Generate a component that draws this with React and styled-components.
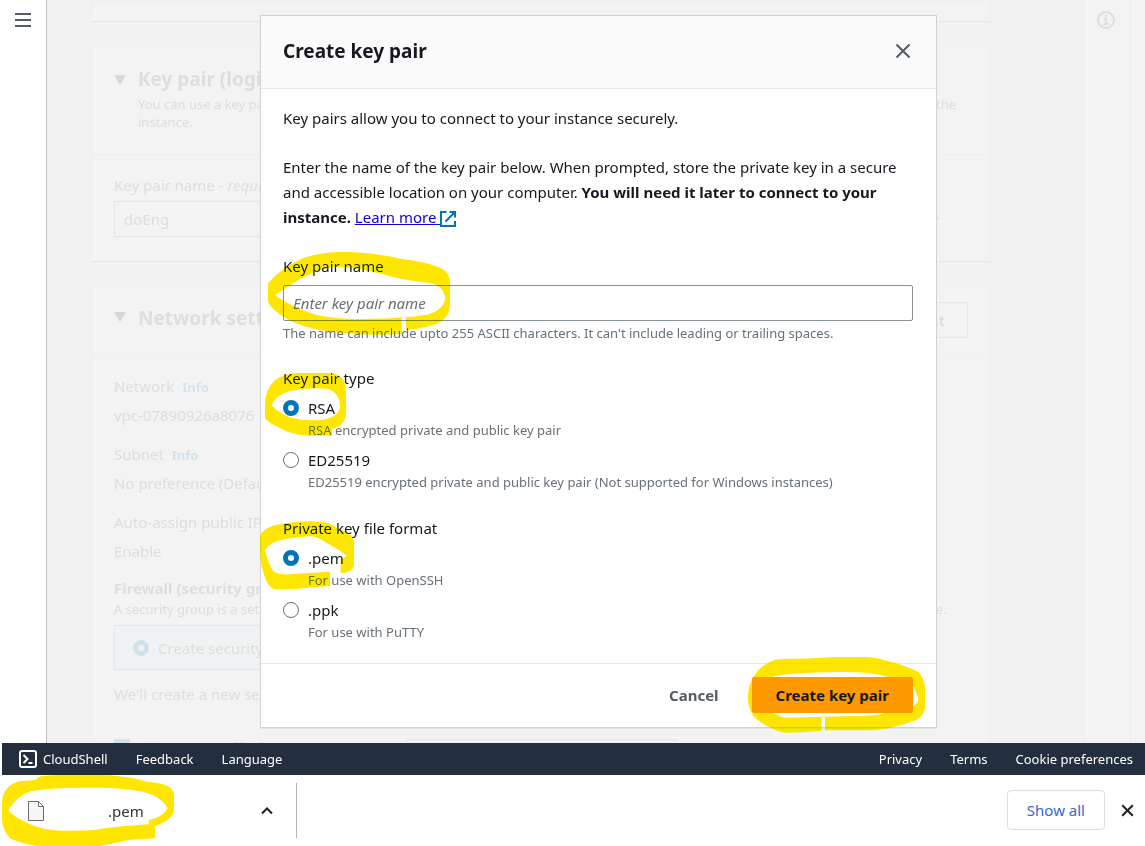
import React from "react";
import styled, { createGlobalStyle, css } from "styled-components";

const GlobalStyle = createGlobalStyle`
  *, *::before, *::after { box-sizing: border-box; }
  body {
    margin: 0;
    background: #fff;
    color: #16191f;
    font-family: "Noto Sans", "Open Sans", sans-serif;
    font-size: 15px;
    line-height: 24px;
  }
  button, input { font: inherit; color: inherit; }
  button { cursor: pointer; }
  h1, h2, p, fieldset, legend { margin: 0; padding: 0; border: 0; }
`;

const Page = styled.div`
  display: flex;
  flex-direction: column;
  min-height: 100vh;
  overflow: hidden;
`;

const Stage = styled.main`
  position: relative;
  flex: 1;
  display: flex;
  justify-content: center;
  align-items: flex-start;
  padding: 16px 0 16px 52px;
`;

/* ---------- Console page behind the dialog ---------- */

const Console = styled.div`
  position: absolute;
  inset: 0;
  overflow: hidden;
  display: flex;
  background: #f2f2f2;
  color: #dedede;
`;

const SideRail = styled.nav`
  flex: none;
  width: 47px;
  padding: 12px 15px;
  background: #fff;
  border-right: 1px solid #c0c2c2;
`;

const PlainButton = styled.button`
  display: flex;
  padding: 0;
  border: 0;
  background: none;
`;

const Content = styled.div`
  flex: 1;
  min-width: 0;
  display: flex;
  flex-direction: column;
  gap: 24px;
  padding: 0 92px 0 44px;
`;

const Panel = styled.section`
  flex: none;
  background: #f3f3f3;
  border: 1px solid #efefef;
  border-bottom-color: #e4e5e5;
`;

const PanelTail = styled(Panel)`
  height: 22px;
`;

const PanelHeader = styled.header`
  display: flex;
  align-items: flex-start;
  gap: 12px;
  padding: ${(p) => (p.$compact ? "15px 22px 18px" : "18px 22px 23px")};
  border-bottom: 1px solid #efefef;
`;

const Caret = styled.svg`
  flex: none;
  width: 12px;
  height: 32px;
`;

const PanelTitle = styled.h2`
  margin-bottom: 2px;
  font-size: 19px;
  line-height: ${(p) => (p.$compact ? 32 : 28)}px;
  font-weight: 700;
`;

const HeaderText = styled.div`
  flex: 1;
  white-space: nowrap;
`;

const Hint = styled.p`
  font-size: 13px;
  line-height: 18px;
  white-space: nowrap;
`;

const PanelBody = styled.div`
  padding: ${(p) => (p.$compact ? "15px 22px 24px" : "18px 22px 24px")};
  white-space: nowrap;
`;

const FauxRow = styled.div`
  display: flex;
  align-items: center;
  justify-content: space-between;
  margin-top: 4px;
  padding-right: 28px;
`;

const FauxSelect = styled.button`
  width: 60%;
  height: 36px;
  padding: 0 9px;
  text-align: left;
  background: none;
  border: 1px solid #e4e5e5;
`;

const FaintLink = styled.a`
  color: ${(p) => (p.$dim ? "#e2e8ec" : "#d3e4ec")};
  font-size: ${(p) => (p.$dim ? "15px" : "13px")};
  line-height: 16px;
  font-weight: 700;
  text-decoration: none;
`;

const EditButton = styled.button`
  height: 36px;
  padding: 0 22px;
  font-weight: 700;
  background: none;
  border: 1px solid #e4e5e5;
  border-radius: 2px;
`;

const Pair = styled.div`
  margin-bottom: 10px;
  line-height: 29px;
`;

const Firewall = styled.div`
  display: flex;
  flex-direction: column;
  align-items: flex-start;
`;

const Tile = styled.label`
  display: flex;
  align-items: center;
  gap: 9px;
  width: 400px;
  height: 45px;
  margin: 7px 0 12px;
  padding: 0 18px;
  background: #f0f3f3;
  border: 1px solid #dce8ea;
`;

const SshRow = styled.div`
  display: flex;
  align-items: flex-start;
  margin-top: 33px;
  gap: 9px;
`;

const FaintCheck = styled.input`
  appearance: none;
  width: 16px;
  height: 16px;
  margin: 0;
  background: #d0e2ec;
`;

const SshLabel = styled.label`
  width: 258px;
  line-height: 16px;
`;

const SshSelect = styled.button`
  width: 270px;
  height: 36px;
  background: none;
  border: 1px solid #e4e5e5;
`;

const ToolsRail = styled.aside`
  flex: none;
  width: 48px;
  padding: 11px 13px;
  background: #f3f3f3;
  border: 1px solid #ededed;
  border-width: 0 1px;
`;

const Scrollbar = styled.div`
  flex: none;
  width: 14px;
  background: #f3f3f3;
`;

/* ---------- Dialog ---------- */

const Dialog = styled.div`
  position: relative;
  width: 675px;
  max-width: 90%;
  background: #fff;
  box-shadow: 0 0 0 1px #d0d3d4, 0 1px 1px 0 #8a8f92;
`;

const DialogHeader = styled.header`
  display: flex;
  align-items: center;
  justify-content: space-between;
  height: 73px;
  padding: 0 25px 2px 22px;
  background: #fafafa;
  border-bottom: 1px solid #e6e9e9;
`;

const DialogTitle = styled.h1`
  font-size: 19px;
  line-height: 24px;
  font-weight: 700;
`;

const DialogBody = styled.div`
  display: flex;
  flex-direction: column;
  gap: 24px;
  padding: 17px 23px 21px 22px;
`;

const Intro = styled.p`
  line-height: 25px;
`;

const LearnLink = styled.a`
  color: #1300d0;
  text-decoration: underline;
`;

const LinkIcon = styled.svg`
  width: 16px;
  height: 16px;
  vertical-align: -4px;
`;

const Field = styled.div`
  position: relative;
  display: flex;
  flex-direction: column;
`;

const Label = styled.label`
  line-height: 24px;
`;

const TextInput = styled.input`
  width: 100%;
  height: 36px;
  margin: 7px 0 3px;
  padding: 0 9px;
  background: none;
  border: 1px solid #879196;
  border-radius: 2px;
  &::placeholder {
    color: #687078;
    font-style: italic;
    opacity: 1;
  }
`;

const Note = styled.span`
  color: #687078;
  font-size: 13px;
  line-height: 18px;
`;

const Group = styled.fieldset`
  position: relative;
  min-width: 0;
`;

const Legend = styled.legend`
  line-height: 24px;
`;

const Option = styled.label`
  display: grid;
  grid-template-columns: 16px 1fr;
  column-gap: 9px;
  align-items: center;
  margin-top: ${(p) => (p.$first ? "6px" : "8px")};
  ${Note} { grid-column: 2; line-height: 20px; }
`;

const ring = css`
  border: 5px solid #0073bb;
`;

const Radio = styled.input`
  appearance: none;
  position: relative;
  z-index: 1;
  width: 16px;
  height: 16px;
  margin: 0;
  border: 1px solid #687078;
  border-radius: 50%;
  background: #fff;
  &:checked { ${ring} }
`;

const FaintRadio = styled(Radio)`
  z-index: auto;
  background: #f3f3f3;
  &:checked { border-color: #d0e2ec; }
`;

const DialogFooter = styled.footer`
  display: flex;
  align-items: center;
  justify-content: flex-end;
  gap: 12px;
  height: 64px;
  padding: 0 23px 2px;
  border-top: 1px solid #e6e9e9;
`;

const ActionWrap = styled.div`
  position: relative;
`;

const ActionButton = styled.button`
  display: block;
  height: 36px;
  padding: 0 ${(p) => (p.$primary ? 24 : 21)}px;
  border: 0;
  border-radius: 2px;
  font-weight: 700;
  color: ${(p) => (p.$primary ? "#16191f" : "#545b64")};
  background: ${(p) => (p.$primary ? "#ff9900" : "none")};
`;

/* Freehand marker strokes drawn over the parts they point at */
const Marker = styled.svg`
  position: absolute;
  left: ${(p) => p.$x}px;
  top: ${(p) => p.$y}px;
  width: ${(p) => p.$w}px;
  height: ${(p) => p.$h}px;
  fill: #ffe600;
  fill-rule: evenodd;
  mix-blend-mode: darken;
  pointer-events: none;
`;

/* ---------- Bottom bars ---------- */

const FooterBar = styled.footer`
  position: relative;
  display: flex;
  align-items: center;
  gap: 28px;
  height: 32px;
  margin-left: 2px;
  padding: 0 12px 0 16px;
  background: #232f3e;
`;

const FooterLink = styled.a`
  display: flex;
  align-items: center;
  gap: 5px;
  margin-left: ${(p) => (p.$push ? "auto" : 0)};
  color: #fff;
  font-size: 13px;
  font-weight: 400;
  text-decoration: none;
`;

const Downloads = styled.div`
  position: relative;
  display: flex;
  align-items: center;
  height: 71px;
  padding: 0 11px 0 28px;
  background: #fff;
`;

const DownloadItem = styled.div`
  display: flex;
  align-items: center;
  width: 269px;
  height: 55px;
  padding-right: 22px;
  border-right: 1px solid #b5b5b5;
`;

const FileName = styled.span`
  flex: 1;
  padding-left: 64px;
  color: #333;
`;

const ShowAll = styled.button`
  height: 40px;
  margin: 0 16px 2px auto;
  padding: 0 19px;
  border: 1px solid #dadce0;
  border-radius: 4px;
  background: #fff;
  color: #3367d6;
`;

function CloseIcon({ size, color, width }) {
  return (
    <svg width={size} height={size} viewBox="0 0 16 16" fill="none" stroke={color} strokeWidth={width}>
      <path d="M1.5 1.5l13 13M14.5 1.5l-13 13" />
    </svg>
  );
}

function TitleCaret() {
  return (
    <Caret viewBox="0 0 12 32">
      <path d="M0 10h12l-6 10z" fill="#d8d8d8" />
    </Caret>
  );
}

function RadioOption({ name, value, label, note, first, checked }) {
  return (
    <Option $first={first}>
      <Radio type="radio" name={name} value={value} defaultChecked={checked} />
      <span>{label}</span>
      <Note>{note}</Note>
    </Option>
  );
}

function ConsolePage() {
  return (
    <Console>
      <SideRail>
        <PlainButton aria-label="Open navigation">
          <svg width="16" height="16" viewBox="0 0 16 16" stroke="#545b64" strokeWidth="2">
            <path d="M0 2h16M0 8h16M0 14h16" />
          </svg>
        </PlainButton>
      </SideRail>
      <Content>
        <PanelTail />
        <Panel>
          <PanelHeader>
            <TitleCaret />
            <HeaderText>
              <PanelTitle>Key pair (login)</PanelTitle>
              <Hint>
                You can use a key pair to securely connect to your instance. Ensure that you have access to the selected key pair before you launch the
                <br />
                instance.
              </Hint>
            </HeaderText>
          </PanelHeader>
          <PanelBody>
            <div>
              Key pair name - <em>required</em>
            </div>
            <FauxRow>
              <FauxSelect>doEng</FauxSelect>
              <FaintLink href="#key" $dim>Create new key pair</FaintLink>
            </FauxRow>
          </PanelBody>
        </Panel>
        <Panel>
          <PanelHeader $compact>
            <TitleCaret />
            <HeaderText>
              <PanelTitle $compact>Network settings</PanelTitle>
            </HeaderText>
            <EditButton>Edit</EditButton>
          </PanelHeader>
          <PanelBody $compact>
            <Pair>
              Network&nbsp; <FaintLink href="#network">Info</FaintLink>
              <div>vpc-07890926a8076</div>
            </Pair>
            <Pair>
              Subnet&nbsp; <FaintLink href="#subnet">Info</FaintLink>
              <div>No preference (Default subnet)</div>
            </Pair>
            <Pair>
              Auto-assign public IP
              <div>Enable</div>
            </Pair>
            <Firewall>
              <strong>Firewall (security groups)</strong>
              <Hint>
                A security group is a set of firewall rules that control the traffic for your instance. Add rules to allow specific traffic to reach your instance.
              </Hint>
              <Tile>
                <FaintRadio type="radio" name="group" defaultChecked />
                Create security group
              </Tile>
              <div>We'll create a new security group</div>
            </Firewall>
            <SshRow>
              <FaintCheck id="ssh" type="checkbox" defaultChecked />
              <SshLabel htmlFor="ssh">Allow SSH traffic from</SshLabel>
              <SshSelect aria-label="Traffic source" />
            </SshRow>
          </PanelBody>
        </Panel>
      </Content>
      <ToolsRail>
        <svg width="18" height="18" viewBox="0 0 18 18" fill="none" stroke="#dedede" strokeWidth="2">
          <circle cx="9" cy="9" r="8" />
          <path d="M7 8h2v5M6.5 13h5M8 5h2" />
        </svg>
      </ToolsRail>
      <Scrollbar />
    </Console>
  );
}

export default function App() {
  return (
    <Page>
      <GlobalStyle />
      <Stage>
        <ConsolePage />
        <Dialog role="dialog" aria-labelledby="dialog-title">
          <DialogHeader>
            <DialogTitle id="dialog-title">Create key pair</DialogTitle>
            <PlainButton aria-label="Close">
              <CloseIcon size={16} color="#545b64" width={2} />
            </PlainButton>
          </DialogHeader>
          <DialogBody>
            <Intro>Key pairs allow you to connect to your instance securely.</Intro>
            <Intro>
              Enter the name of the key pair below. When prompted, store the private key in a secure and accessible
              location on your computer. <strong>You will need it later to connect to your instance.</strong>{" "}
              <LearnLink href="#learn">
                Learn more{" "}
                <LinkIcon viewBox="0 0 16 16" fill="none" stroke="#0073bb" strokeWidth="2">
                  <path d="M9.500 1H15v5.500M5.500 10.500L15 1M15 10v5H1V1h5.500" />
                </LinkIcon>
              </LearnLink>
            </Intro>
            <Field>
              <Label htmlFor="key-name">Key pair name</Label>
              <TextInput id="key-name" type="text" placeholder="Enter key pair name" />
              <Note>The name can include upto 255 ASCII characters. It can't include leading or trailing spaces.</Note>
              <Marker viewBox="21 330 555 255" $x={-16} $y={-4} $w={185} $h={85}>
                <path d="M24 430Q60 385 130 354Q190 334 260 336Q350 338 430 358Q500 366 545 385Q570 400 570 430V495Q570 530 535 550Q500 564 438 571V530L425 534V582Q330 588 240 578Q130 568 70 530Q24 500 24 480ZM45 465Q90 500 170 525Q240 540 330 536Q430 535 500 524Q550 512 556 475Q548 430 500 428Q420 420 370 403Q300 382 220 380Q150 395 100 430Z" />
              </Marker>
            </Field>
            <Group>
              <Legend>Key pair type</Legend>
              <RadioOption name="type" value="rsa" label="RSA" note="RSA encrypted private and public key pair" first checked />
              <RadioOption name="type" value="ed" label="ED25519" note="ED25519 encrypted private and public key pair (Not supported for Windows instances)" />
              <Marker viewBox="9 63 252 201" $x={-20} $y={-19} $w={84} $h={67}>
                <path d="M15 165Q14 120 45 90Q75 70 110 69H200Q240 68 252 92Q258 110 258 145V190Q256 228 216 237V257H145Q95 256 55 232Q12 210 15 200ZM35 168Q75 200 100 205Q140 214 190 209Q235 200 240 172Q240 130 205 117Q150 110 90 123Q40 140 35 168Z" />
              </Marker>
            </Group>
            <Group>
              <Legend>Private key file format</Legend>
              <RadioOption name="format" value="pem" label=".pem" note="For use with OpenSSH" first checked />
              <RadioOption name="format" value="ppk" label=".ppk" note="For use with PuTTY" />
              <Marker viewBox="777 57 291 216" $x={-24} $y={-21} $w={97} $h={72}>
                <path d="M780 108Q790 82 840 73Q900 60 960 65Q995 68 1015 87Q1062 102 1062 128V195Q1060 218 1022 220V178L1040 168Q1020 150 990 135Q950 108 930 108L860 116Q810 124 795 150Q806 195 820 213Q835 226 870 223L990 215V258L940 262Q880 270 825 268Q808 264 798 240Q780 200 780 150Z" />
              </Marker>
            </Group>
          </DialogBody>
          <DialogFooter>
            <ActionButton>Cancel</ActionButton>
            <ActionWrap>
              <ActionButton $primary>Create key pair</ActionButton>
              <Marker viewBox="315 45 543 240" $x={-6} $y={-22} $w={181} $h={80}>
                <path d="M321 180Q318 130 350 92Q385 58 420 57Q500 57 580 51H680Q710 53 730 61Q790 74 835 98Q852 120 852 150V205Q848 232 820 242Q760 264 700 271H552V228L542 230V272Q490 278 430 278Q390 270 350 240Q324 220 321 180ZM395 112Q410 101 560 97Q680 92 740 110L818 140L832 175Q832 192 815 200L730 220Q700 228 640 228L430 233L395 218Z" />
              </Marker>
            </ActionWrap>
          </DialogFooter>
        </Dialog>
      </Stage>
      <FooterBar>
        <FooterLink href="#cloudshell">
          <svg width="20" height="20" viewBox="0 0 20 20" fill="none" stroke="#fff" strokeWidth="2">
            <rect x="2" y="2" width="16" height="16" rx="2" />
            <path d="M5.500 6l4 4-4 4M10.500 14h4" />
          </svg>
          CloudShell
        </FooterLink>
        <FooterLink href="#feedback">Feedback</FooterLink>
        <FooterLink href="#language">Language</FooterLink>
        <FooterLink href="#privacy" $push>Privacy</FooterLink>
        <FooterLink href="#terms">Terms</FooterLink>
        <FooterLink href="#cookies">Cookie preferences</FooterLink>
      </FooterBar>
      <Downloads>
        <DownloadItem>
          <svg width="16" height="20" viewBox="0 0 16 20" fill="#f7f7f7" stroke="#6b6b6b">
            <path d="M.5.5h10l5 5v14H.5zM10.500.5v5h5" />
          </svg>
          <FileName>.pem</FileName>
          <PlainButton aria-label="Download options">
            <svg width="14" height="14" viewBox="0 0 14 14" fill="none" stroke="#202124" strokeWidth="2">
              <path d="M2 9.500l5-5 5 5" />
            </svg>
          </PlainButton>
        </DownloadItem>
        <ShowAll>Show all</ShowAll>
        <PlainButton aria-label="Close downloads">
          <CloseIcon size={13} color="#202124" width={2.5} />
        </PlainButton>
        <Marker viewBox="0 129 528 219" $x={0} $y={-2} $w={176} $h={73}>
          <path d="M6 215Q10 165 60 154L105 150L122 139Q200 132 330 136Q400 142 440 155Q490 158 510 172Q522 185 522 200V240Q518 270 465 288V325L390 329L330 342L300 348H110Q60 340 30 325Q8 300 6 270ZM25 242Q45 262 80 278Q130 302 190 302Q260 302 290 299Q340 290 447 283V270Q485 264 503 235Q480 195 420 184Q360 172 280 173Q160 172 95 183Q50 196 25 242Z" />
        </Marker>
      </Downloads>
    </Page>
  );
}
